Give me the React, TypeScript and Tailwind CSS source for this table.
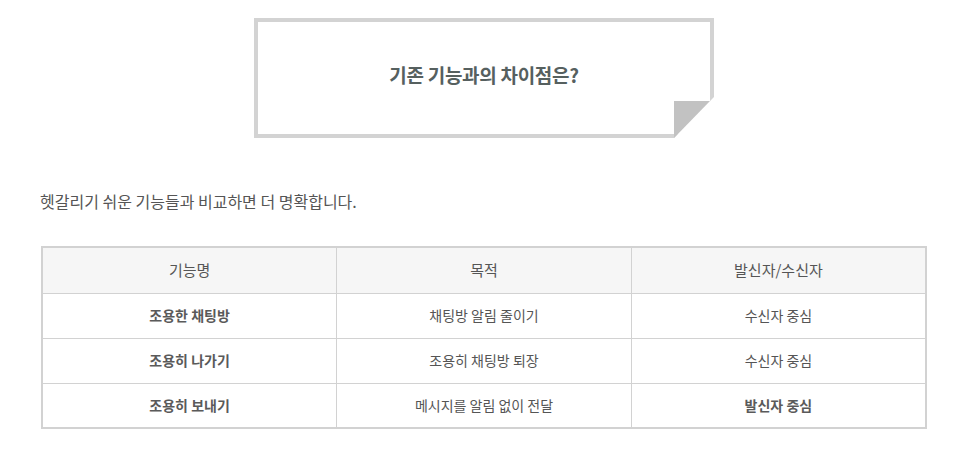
import React from 'react';

const rows = [
  { name: '조용한 채팅방', purpose: '채팅방 알림 줄이기', who: '수신자 중심', strong: false },
  { name: '조용히 나가기', purpose: '조용히 채팅방 퇴장', who: '수신자 중심', strong: false },
  { name: '조용히 보내기', purpose: '메시지를 알림 없이 전달', who: '발신자 중심', strong: true },
];

const App = () => {
  return (
    <div
      className="w-[964px] h-[458px] bg-white text-[#555] overflow-hidden"
      style={{ fontFamily: '"Noto Sans CJK KR", "Noto Sans", sans-serif' }}
    >
      <div className="pt-[18px] pl-[4px] flex justify-center">
        {/* callout with folded corner */}
        <div className="relative w-[460px] h-[120px] border-4 border-[#d3d3d3] bg-white flex items-center justify-center">
          <h2 className="text-[19px] font-bold text-[#56605f] tracking-[-0.3px] -mt-[6px]">기존 기능과의 차이점은?</h2>
          <svg className="absolute right-[-4px] bottom-[-4px]" width="40" height="41" viewBox="0 0 40 41">
            <polygon points="0,41 40,0 40,41" fill="#ffffff" />
            <polygon points="0,4 36,4 0,41" fill="#c2c2c2" />
          </svg>
        </div>
      </div>

      <p className="pl-[40px] mt-[51px] text-[16px] leading-[24px] text-[#555]">헷갈리기 쉬운 기능들과 비교하면 더 명확합니다.</p>

      <div className="pl-[41px] mt-[33px]">
        <table className="w-[886px] border-collapse border-2 border-[#d2d2d2] text-[14px] table-fixed">
          <thead>
            <tr className="bg-[#f6f6f6] h-[46px] text-[15px]">
              <th className="font-normal border border-[#d2d2d2]">기능명</th>
              <th className="font-normal border border-[#d2d2d2]">목적</th>
              <th className="font-normal border border-[#d2d2d2]">발신자/수신자</th>
            </tr>
          </thead>
          <tbody>
            {rows.map((r) => (
              <tr key={r.name} className="h-[45px]">
                <td className="text-center font-bold text-[#5a5a5a] border border-[#d2d2d2]">{r.name}</td>
                <td className="text-center border border-[#d2d2d2]">{r.purpose}</td>
                <td className={`text-center border border-[#d2d2d2] ${r.strong ? 'font-bold text-[#5a5a5a]' : ''}`}>{r.who}</td>
              </tr>
            ))}
          </tbody>
        </table>
      </div>
    </div>
  );
};

export default App;
